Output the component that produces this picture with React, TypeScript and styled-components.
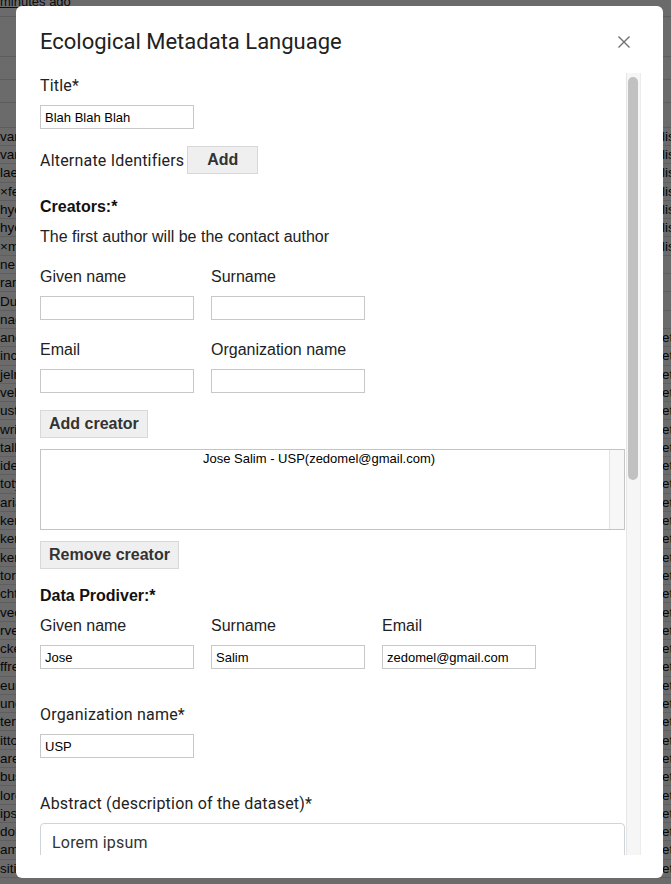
import React from 'react';
import styled, { createGlobalStyle } from 'styled-components';

const GlobalStyle = createGlobalStyle`
  * {
    box-sizing: border-box;
  }
  html,
  body {
    margin: 0;
    padding: 0;
    height: 100%;
    overflow: hidden;
  }
  body {
    font-family: 'Liberation Sans', Arial, sans-serif;
    background: #ffffff;
    color: #222222;
  }
`;

const classic = `'Liberation Sans', Arial, Helvetica, sans-serif`;
const system = `Roboto, 'Noto Sans', sans-serif`;

// background page (table behind the dialog)
const Page = styled.div`
  width: 671px;
  height: 884px;
  overflow: hidden;
  background: #ffffff;
  font-size: 13px;
`;

const TopLine = styled.div`
  height: 17px;
  border-bottom: 1px solid #dddddd;
  line-height: 4px;
  overflow: hidden;
`;

const AgoLink = styled.span`
  color: #222222;
  text-decoration: underline;
`;

const HeadRow = styled.div<{ $h: number }>`
  height: ${(p) => p.$h}px;
  border-bottom: 1px solid #dddddd;
`;

const Row = styled.div`
  height: 18.3px;
  display: grid;
  grid-template-columns: 662px 1fr;
  align-items: center;
  border-bottom: 1px solid #e0e0e0;
  line-height: 17px;
  font-size: 13.5px;
  color: #111111;
  white-space: nowrap;
  overflow: hidden;
`;

const Cell = styled.div`
  overflow: hidden;
`;

const Overlay = styled.div`
  position: fixed;
  inset: 0;
  background: rgba(0, 0, 0, 0.58);
  display: flex;
  padding: 6px 8px 6px 16px;
`;

const Dialog = styled.div`
  width: 647px;
  height: 872px;
  background: #ffffff;
  border-radius: 6px;
  display: flex;
  flex-direction: column;
  padding: 0 22px 23px 24px;
  font-family: ${system};
  color: #222222;
`;

const Header = styled.div`
  height: 67px;
  flex: none;
  display: flex;
  align-items: center;
  justify-content: space-between;
  padding: 5px 10px 0 0;
`;

const DialogTitle = styled.h4`
  margin: 0;
  font-size: 22px;
  font-weight: 400;
  line-height: 1.2;
  color: #212121;
`;

const CloseButton = styled.button`
  border: 0;
  background: none;
  padding: 0;
  width: 14px;
  height: 14px;
  display: flex;
  cursor: pointer;
`;

const Body = styled.div`
  flex: 1;
  min-height: 0;
  display: flex;
`;

const BodyContent = styled.div`
  flex: 1;
  min-width: 0;
  overflow: hidden;
`;

// scroll tracks are drawn, the headless browser hides native scrollbars
const ScrollTrack = styled.div<{ $flat?: boolean }>`
  flex: none;
  width: 15px;
  background: ${(p) => (p.$flat ? '#f7f7f7' : '#f6f6f6')};
  border-left: 1px solid ${(p) => (p.$flat ? '#e2e2e2' : '#e6e6e6')};
  border-right: ${(p) => (p.$flat ? '0' : '1px solid #ececec')};
  padding: 4px 2px 0 1px;
`;

const ScrollThumb = styled.div<{ $h: number }>`
  height: ${(p) => p.$h}px;
  border-radius: 5px;
  background: #c1c1c1;
`;

const Group = styled.div<{ $top?: number }>`
  margin-top: ${(p) => p.$top ?? 0}px;
`;

const Label = styled.label<{ $classic?: boolean }>`
  display: block;
  height: 24px;
  font-family: ${(p) => (p.$classic ? classic : system)};
  font-size: 16px;
  line-height: 24px;
  letter-spacing: ${(p) => (p.$classic ? 0 : 0.2)}px;
  margin-bottom: 8px;
  padding-top: 1px;
  color: #222222;
  white-space: nowrap;
`;

const TextInput = styled.input`
  display: block;
  width: 154px;
  height: 24px;
  border: 1px solid #c8c8c8;
  padding: 0 4px;
  font-family: ${classic};
  font-size: 13px;
  color: #000000;
  background: #ffffff;
  outline: none;
`;

const InlineRow = styled.div`
  margin-top: 17px;
  display: flex;
  align-items: center;
  gap: 3px;
  height: 28px;

  ${Label} {
    margin: 0;
  }
`;

const GreyButton = styled.button<{ $top?: number; $minWidth?: number }>`
  display: block;
  margin-top: ${(p) => p.$top ?? 0}px;
  min-width: ${(p) => p.$minWidth ?? 0}px;
  height: 28px;
  padding: 0 8px;
  background: #efefef;
  border: 1px solid #d8d8d8;
  border-radius: 0;
  font-family: ${classic};
  font-size: 16px;
  font-weight: 700;
  color: #333333;
  cursor: pointer;
`;

const Heading = styled.div<{ $top: number }>`
  margin-top: ${(p) => p.$top}px;
  padding-top: 1px;
  height: 24px;
  font-family: ${classic};
  font-size: 16px;
  font-weight: 700;
  line-height: 24px;
  color: #111111;
`;

const Note = styled.div`
  margin-top: 6px;
  padding-top: 1px;
  height: 24px;
  font-family: ${classic};
  font-size: 16px;
  line-height: 24px;
  color: #222222;
`;

const FieldGrid = styled.div<{ $top: number; $cols: number }>`
  margin-top: ${(p) => p.$top}px;
  display: grid;
  grid-template-columns: repeat(${(p) => p.$cols}, 154px);
  column-gap: 17px;
  row-gap: 17px;
`;

const CreatorList = styled.div`
  margin-top: 11px;
  width: 585px;
  height: 81px;
  border: 1px solid #c4c4c4;
  display: flex;
  font-family: ${classic};
  font-size: 13px;
  color: #000000;
`;

const OptionArea = styled.div`
  flex: 1;
  min-width: 0;
`;

const CreatorOption = styled.div`
  text-align: center;
  padding: 1px 12px 0 0;
  line-height: 15px;
`;

const TextArea = styled.textarea`
  display: block;
  width: 585px;
  height: 134px;
  border: 1px solid #ced4da;
  border-radius: 4px;
  padding: 7px 11px 6px;
  font-family: ${system};
  font-size: 16px;
  line-height: 24px;
  letter-spacing: 0.2px;
  color: #333333;
  resize: none;
  outline: none;
`;

const leftWords = [
  'variegata', 'varius', 'laevis', '×ferox', 'hyemalis', 'hyemale', '×media', 'ne Ibis',
  'ranunculus', 'Dubia', 'naevius', 'ancora', 'incana', 'jelroso', 'vellea', 'ustrina',
  'writing', 'tallia', 'ideal', 'totypus', 'arianum', 'kerii', 'kerii', 'kerii',
  'torius', 'chtum', 'vecta', 'rvesi', 'ckeri', 'ffrei', 'eum', 'uncus',
  'terum', 'ittos', 'arena', 'bustum', 'lorem', 'ipsum', 'dolor', 'amet', 'sitis',
];

const rightWord = (i: number) => {
  if (i < 7) return 'lis';
  if (i < 11) return '';
  return 'eta';
};

const extraFields = [
  'Keywords',
  'Geographic description',
  'Temporal coverage (begin)',
  'Temporal coverage (end)',
  'License',
  'Methods',
  'Funding',
];

function BackgroundPage() {
  return (
    <Page>
      <TopLine>
        <AgoLink>minutes ago</AgoLink>
      </TopLine>
      <HeadRow $h={40} />
      <HeadRow $h={23} />
      <HeadRow $h={23} />
      <HeadRow $h={24.7} />
      {leftWords.map((w, i) => (
        <Row key={i}>
          <Cell>{w}</Cell>
          <Cell>{rightWord(i)}</Cell>
        </Row>
      ))}
    </Page>
  );
}

function CloseIcon() {
  return (
    <svg width="14" height="14" viewBox="0 0 14 14">
      <path d="M1.5 1.5 L12.5 12.5 M12.5 1.5 L1.5 12.5" stroke="#707070" strokeWidth="1.4" fill="none" />
    </svg>
  );
}

function EmlDialog() {
  return (
    <Overlay>
      <Dialog role="dialog">
        <Header>
          <DialogTitle>Ecological Metadata Language</DialogTitle>
          <CloseButton type="button" aria-label="Close">
            <CloseIcon />
          </CloseButton>
        </Header>
        <Body>
          <BodyContent>
            <Group>
              <Label>Title*</Label>
              <TextInput defaultValue="Blah Blah Blah" />
            </Group>

            <InlineRow>
              <Label>Alternate Identifiers</Label>
              <GreyButton type="button" $minWidth={71}>
                Add
              </GreyButton>
            </InlineRow>

            <Heading $top={20}>Creators:*</Heading>
            <Note>The first author will be the contact author</Note>

            <FieldGrid $top={16} $cols={2}>
              <div>
                <Label $classic>Given name</Label>
                <TextInput />
              </div>
              <div>
                <Label $classic>Surname</Label>
                <TextInput />
              </div>
              <div>
                <Label $classic>Email</Label>
                <TextInput />
              </div>
              <div>
                <Label $classic>Organization name</Label>
                <TextInput />
              </div>
            </FieldGrid>

            <GreyButton type="button" $top={17}>
              Add creator
            </GreyButton>

            <CreatorList role="listbox">
              <OptionArea>
                <CreatorOption>Jose Salim - USP(zedomel@gmail.com)</CreatorOption>
              </OptionArea>
              <ScrollTrack $flat />
            </CreatorList>

            <GreyButton type="button" $top={11}>
              Remove creator
            </GreyButton>

            <Heading $top={14}>Data Prodiver:*</Heading>
            <FieldGrid $top={6} $cols={3}>
              <div>
                <Label $classic>Given name</Label>
                <TextInput defaultValue="Jose" />
              </div>
              <div>
                <Label $classic>Surname</Label>
                <TextInput defaultValue="Salim" />
              </div>
              <div>
                <Label $classic>Email</Label>
                <TextInput defaultValue="zedomel@gmail.com" />
              </div>
            </FieldGrid>

            <Group $top={33}>
              <Label>Organization name*</Label>
              <TextInput defaultValue="USP" />
            </Group>

            <Group $top={33}>
              <Label>Abstract (description of the dataset)*</Label>
              <TextArea defaultValue="Lorem ipsum" />
            </Group>

            {extraFields.map((f) => (
              <Group key={f} $top={33}>
                <Label>{f}</Label>
                <TextInput />
              </Group>
            ))}
          </BodyContent>
          <ScrollTrack>
            <ScrollThumb $h={403} />
          </ScrollTrack>
        </Body>
      </Dialog>
    </Overlay>
  );
}

export default function App() {
  return (
    <>
      <GlobalStyle />
      <BackgroundPage />
      <EmlDialog />
    </>
  );
}
